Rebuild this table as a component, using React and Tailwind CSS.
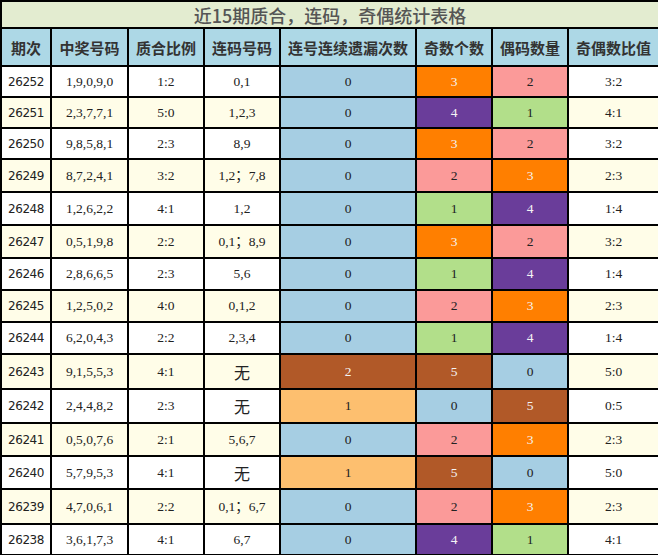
const rows = [
  ["26252", "1,9,0,9,0", "1:2", "0,1", 0, 3, 2, "3:2", 31],
  ["26251", "2,3,7,7,1", "5:0", "1,2,3", 0, 4, 1, "4:1", 31],
  ["26250", "9,8,5,8,1", "2:3", "8,9", 0, 3, 2, "3:2", 31],
  ["26249", "8,7,2,4,1", "3:2", "1,2；7,8", 0, 2, 3, "2:3", 33],
  ["26248", "1,2,6,2,2", "4:1", "1,2", 0, 1, 4, "1:4", 33],
  ["26247", "0,5,1,9,8", "2:2", "0,1；8,9", 0, 3, 2, "3:2", 33],
  ["26246", "2,8,6,6,5", "2:3", "5,6", 0, 1, 4, "1:4", 32],
  ["26245", "1,2,5,0,2", "4:0", "0,1,2", 0, 2, 3, "2:3", 32],
  ["26244", "6,2,0,4,3", "2:2", "2,3,4", 0, 1, 4, "1:4", 32],
  ["26243", "9,1,5,5,3", "4:1", "无", 2, 5, 0, "5:0", 35],
  ["26242", "2,4,4,8,2", "2:3", "无", 1, 0, 5, "0:5", 34],
  ["26241", "0,5,0,7,6", "2:1", "5,6,7", 0, 2, 3, "2:3", 33],
  ["26240", "5,7,9,5,3", "4:1", "无", 1, 5, 0, "5:0", 33],
  ["26239", "4,7,0,6,1", "2:2", "0,1；6,7", 0, 2, 3, "2:3", 35],
  ["26238", "3,6,1,7,3", "4:1", "6,7", 0, 4, 1, "4:1", 31],
];

// 奇数个数 / 偶码数量 colours
const countColor = {
  0: "bg-[#a6cee3] text-[#222]",
  1: "bg-[#b2df8a] text-[#222]",
  2: "bg-[#fb9a99] text-[#222]",
  3: "bg-[#ff7f00] text-[#f4f4f4]",
  4: "bg-[#6a3d9a] text-[#f4f4f4]",
  5: "bg-[#b15928] text-[#f4f4f4]",
};

// 连号连续遗漏次数 colours
const missColor = {
  0: "bg-[#a6cee3] text-[#222]",
  1: "bg-[#fdbf6f] text-[#222]",
  2: "bg-[#b15928] text-[#f4f4f4]",
};

const headers = [
  "期次",
  "中奖号码",
  "质合比例",
  "连码号码",
  "连号连续遗漏次数",
  "奇数个数",
  "偶码数量",
  "奇偶数比值",
];

const cell = "border-2 border-black p-0 text-center align-middle leading-none";
const serif = "font-['Liberation_Serif','Noto_Sans_CJK_SC',serif] text-[13.5px]";

export default function App() {
  return (
    <div className="w-[658px] h-[555px] overflow-hidden bg-white">
      <table className="w-[658px] table-fixed border-collapse">
        <colgroup>
          <col className="w-[50px]" />
          <col className="w-[77px]" />
          <col className="w-[76px]" />
          <col className="w-[76px]" />
          <col className="w-[136px]" />
          <col className="w-[76px]" />
          <col className="w-[76px]" />
          <col className="w-[91px]" />
        </colgroup>
        <tbody>
          <tr className="h-[27px]">
            <td
              colSpan={8}
              className={`${cell} bg-[#e3ecd0] font-['Noto_Sans_CJK_SC',sans-serif] text-[18px] font-medium text-[#555]`}
            >
              近15期质合，连码，奇偶统计表格
            </td>
          </tr>
          <tr className="h-[38px]">
            {headers.map((h) => (
              <td
                key={h}
                className={`${cell} bg-[#add8e6] font-['Noto_Sans_CJK_SC',sans-serif] text-[15px] font-bold whitespace-nowrap text-[#333]`}
              >
                {h}
              </td>
            ))}
          </tr>
          {rows.map(([issue, nums, ratio, link, miss, odd, even, oe, h], i) => {
            const bg = i % 2 === 1 ? "bg-[#fffde8]" : "bg-white";
            return (
              <tr key={issue} style={{ height: h }}>
                <td
                  className={`${cell} font-['DejaVu_Sans',sans-serif] text-[12px] tracking-[-0.4px] text-[#222] ${bg}`}
                >
                  {issue}
                </td>
                <td className={`${cell} text-[#222] ${serif} ${bg}`}>{nums}</td>
                <td className={`${cell} text-[#222] ${serif} ${bg}`}>{ratio}</td>
                {link === "无" ? (
                  <td
                    className={`${cell} font-['Noto_Sans_CJK_SC',sans-serif] text-[16px] text-[#222] ${bg}`}
                  >
                    无
                  </td>
                ) : (
                  <td className={`${cell} text-[#222] ${serif} ${bg}`}>{link}</td>
                )}
                <td className={`${cell} ${serif} ${missColor[miss]}`}>{miss}</td>
                <td className={`${cell} ${serif} ${countColor[odd]}`}>{odd}</td>
                <td className={`${cell} ${serif} ${countColor[even]}`}>{even}</td>
                <td className={`${cell} text-[#222] ${serif} ${bg}`}>{oe}</td>
              </tr>
            );
          })}
        </tbody>
      </table>
    </div>
  );
}
